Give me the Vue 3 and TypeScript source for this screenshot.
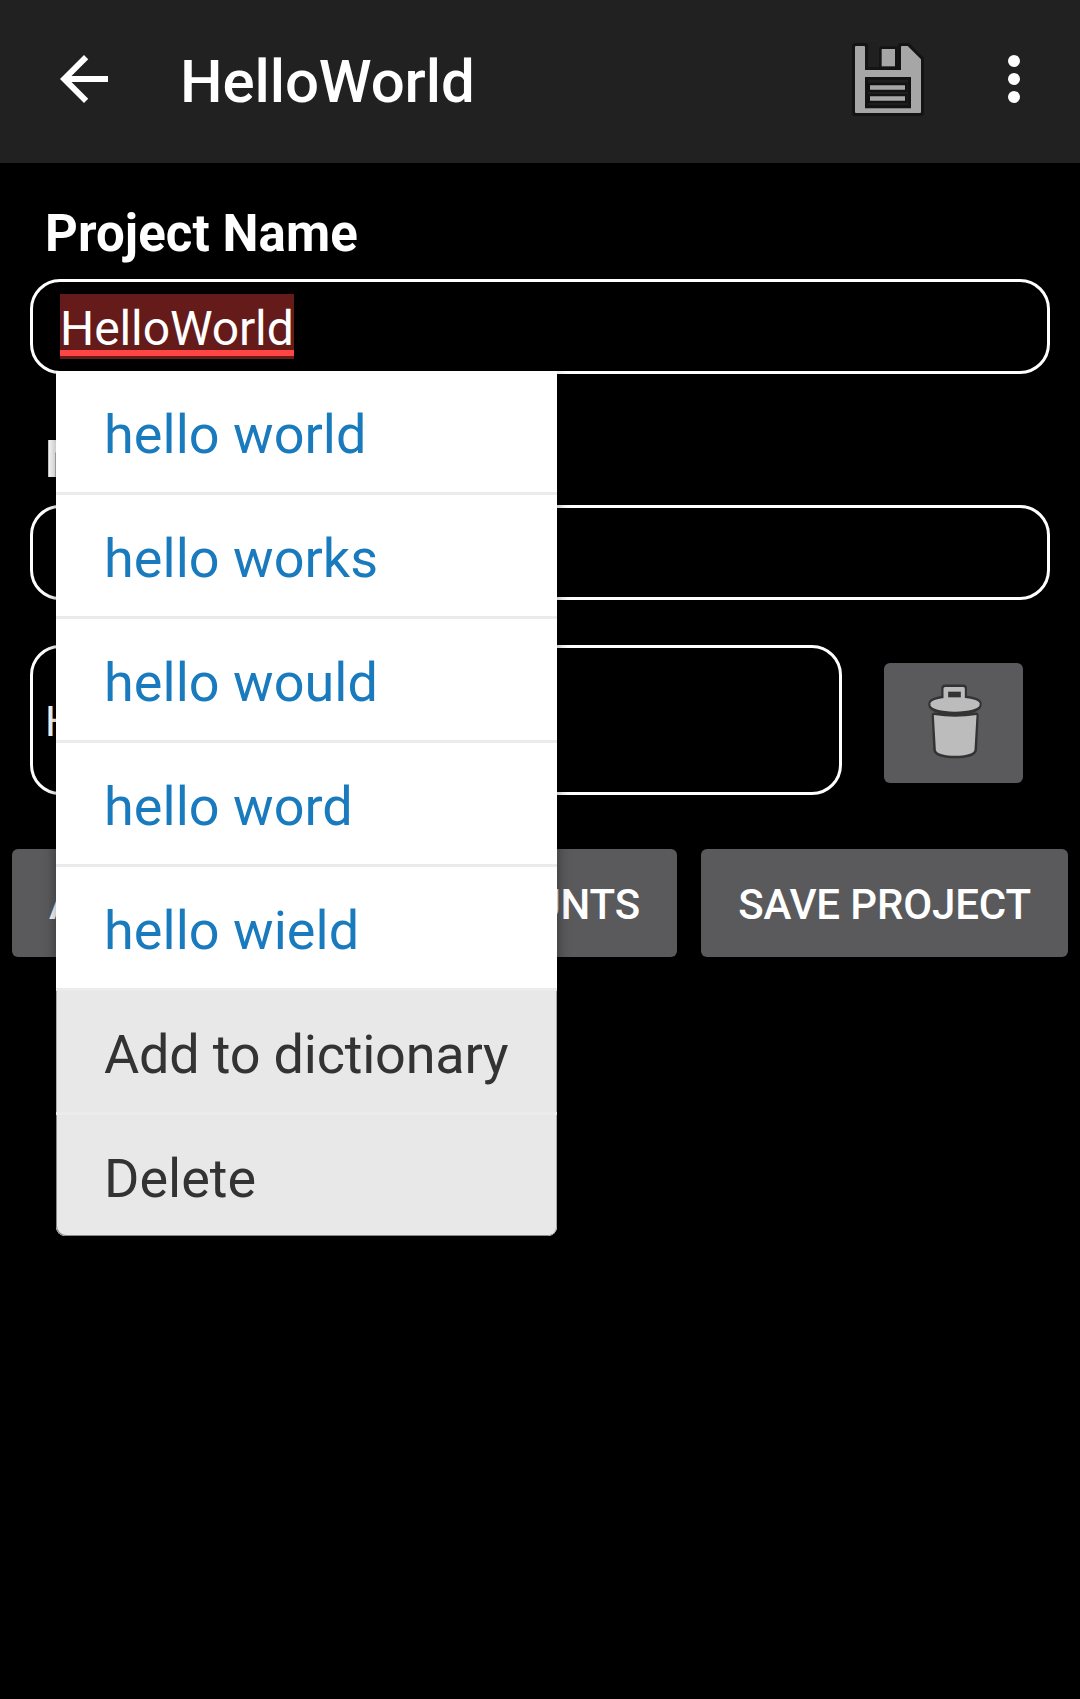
<script setup lang="ts">
import { ref } from 'vue'

interface MenuEntry {
  label: string
  kind: 'suggestion' | 'action'
}

const projectName = ref('HelloWorld')

const entries: MenuEntry[] = [
  { label: 'hello world', kind: 'suggestion' },
  { label: 'hello works', kind: 'suggestion' },
  { label: 'hello would', kind: 'suggestion' },
  { label: 'hello word', kind: 'suggestion' },
  { label: 'hello wield', kind: 'suggestion' },
  { label: 'Add to dictionary', kind: 'action' },
  { label: 'Delete', kind: 'action' },
]
</script>

<template>
  <div class="screen">
    <header class="app-bar">
      <svg class="back" viewBox="0 0 24 24">
        <path d="M20 11H7.83l5.59-5.59L12 4l-8 8 8 8 1.41-1.41L7.83 13H20z" fill="#fff" />
      </svg>
      <h1 class="title">{{ projectName }}</h1>
      <svg class="save" viewBox="96 66 216 225">
        <path d="M105 78H136V150H242V78H264L303 117V279H105Z" fill="#141414" stroke="#141414" stroke-width="18" stroke-linejoin="round" />
        <path d="M146 68H174V139H146Z" fill="#202020" />
        <path d="M185 87H225V139H185Z" fill="#141414" stroke="#141414" stroke-width="16" stroke-linejoin="round" />
        <path d="M107 78H133L135 80V150H243V80L245 78H263L303 118V277L301 279H107L105 277V80Z" fill="#a6a6a6" />
        <path d="M185 87H225V139H185Z" fill="#a6a6a6" />
        <path d="M135 171H273V265H135Z" fill="#121212" />
        <path d="M144 180H264V256H144Z" fill="#1e1e1e" />
        <path d="M143 188H262V216H143ZM143 222H262V249H143Z" fill="#121212" />
        <path d="M150 196H255V209H150ZM150 229H255V242H150Z" fill="#a6a6a6" />
      </svg>
      <svg class="more" viewBox="0 0 24 24">
        <circle cx="12" cy="6" r="2" fill="#fff" />
        <circle cx="12" cy="12" r="2" fill="#fff" />
        <circle cx="12" cy="18" r="2" fill="#fff" />
      </svg>
    </header>

    <main class="form">
      <label class="label">Project Name</label>
      <div class="field">
        <span class="selected">{{ projectName }}</span>
        <div class="menu">
          <div v-for="entry in entries" :key="entry.label" class="entry" :class="entry.kind">
            {{ entry.label }}
          </div>
        </div>
      </div>

      <label class="label second">Notes</label>
      <div class="field"></div>

      <div class="count-row">
        <div class="count">Hello</div>
        <button class="trash" aria-label="Delete count">
          <svg viewBox="70.5 69 180 240">
            <g stroke="#333" stroke-width="17" stroke-linejoin="round" fill="#333">
              <path d="M131 116V84Q131 82 134 82H188Q191 82 191 84V116Z" />
              <path d="M92 136V130C94 119 118 114 163 114S233 119 235 130V136C233 147 205 155 163 155S94 147 92 136Z" />
              <path d="M102 166Q164 175 226 166L221 269C220 281 193 286 164 286S108 281 107 269Z" />
            </g>
            <path d="M129 122V86Q129 81 134 81H188Q193 81 193 86V122Z" fill="#bcbcbc" />
            <path d="M90 136V130C92 119 118 113 163 113S235 119 237 130V136C235 147 205 155 163 155S92 147 90 136Z" fill="#bcbcbc" />
            <path d="M143 95H181V112H143Z" fill="#333" />
            <path d="M100 165Q164 175 228 165L222 269C221 281 193 287 164 287S107 281 106 269Z" fill="#bcbcbc" />
          </svg>
        </button>
      </div>
    </main>

    <footer class="buttons">
      <button class="btn wide"><span>ADD OR REMOVE</span><span>COUNTS</span></button>
      <button class="btn primary">SAVE PROJECT</button>
    </footer>
  </div>
</template>

<style>
body {
  margin: 0;
  background: #000;
}
</style>

<style scoped>
.screen {
  width: 1080px;
  height: 1699px;
  overflow: hidden;
  background: #000;
  color: #fff;
  font-family: Roboto, 'Liberation Sans', sans-serif;
}
.app-bar {
  display: flex;
  align-items: center;
  height: 163px;
  background: #212121;
}
.back {
  width: 72px;
  height: 72px;
  margin: 0 60px 5px 48px;
}
.title {
  flex: 1;
  margin: 0;
  font-size: 60px;
  font-weight: 500;
  line-height: 162px;
  letter-spacing: -0.1px;
}
.save {
  width: 72px;
  height: 75px;
  margin: 0 54px 4px 0;
}
.more {
  width: 72px;
  height: 72px;
  margin: 0 30px 5px 0;
}
.form {
  padding: 39px 30px 0;
}
.label {
  display: block;
  height: 77px;
  padding-left: 15px;
  font-size: 51px;
  font-weight: 700;
  line-height: 63px;
  letter-spacing: 0.08px;
}
.label.second {
  margin-top: 54px;
}
.field {
  position: relative;
  box-sizing: border-box;
  height: 95px;
  padding: 12px 27px;
  border: 3px solid #fff;
  border-radius: 30px;
}
.selected {
  display: block;
  width: 234px;
  height: 65px;
  font-size: 48px;
  line-height: 69px;
  letter-spacing: -0.1px;
  background: linear-gradient(#ff4444, #ff4444) 0 56px / 100% 6px no-repeat #661b1b;
}
.menu {
  position: absolute;
  z-index: 2;
  top: 89px;
  left: 23px;
  width: 501px;
  border-radius: 0 0 9px 9px;
  overflow: hidden;
  background: #fff;
  box-shadow: 0 3px 14px rgba(0, 0, 0, 0.42);
}
.entry {
  box-sizing: border-box;
  height: 124px;
  padding-left: 48px;
  border-bottom: 3px solid #ebebeb;
  font-size: 54px;
  line-height: 127px;
  white-space: nowrap;
}
.suggestion {
  color: #197bbe;
  letter-spacing: 0.04px;
}
.action {
  background: #e8e8e8;
  color: #333;
  box-shadow: inset 1px 0 #aaa, inset -1px 0 #aaa;
}
.action:not(:last-child) {
  letter-spacing: -0.2px;
}
.entry:last-child {
  height: 121px;
  border-bottom: 0;
  border-radius: 0 0 9px 9px;
  box-shadow: inset 1px -1px #888, inset -1px 0 #aaa;
}
.count-row {
  display: flex;
  align-items: center;
  gap: 42px;
  margin-top: 45px;
}
.count {
  box-sizing: border-box;
  width: 812px;
  height: 150px;
  padding-left: 12px;
  border: 3px solid #fff;
  border-radius: 30px;
  font-size: 42px;
  line-height: 147px;
}
button {
  border: 0;
  border-radius: 6px;
  background: #5a595b;
  color: #fff;
  font-family: inherit;
}
.trash {
  display: flex;
  align-items: center;
  justify-content: center;
  width: 139px;
  height: 120px;
  margin-top: 6px;
  padding: 0;
}
.trash svg {
  width: 60px;
  height: 80px;
}
.buttons {
  display: flex;
  gap: 24px;
  margin-top: 54px;
  padding: 0 12px;
}
.btn {
  height: 108px;
  padding: 3px 0 0;
  font-size: 42px;
  font-weight: 500;
  letter-spacing: -0.15px;
  white-space: nowrap;
}
.wide {
  display: flex;
  align-items: center;
  justify-content: space-between;
  width: 665px;
  padding: 3px 37px 0;
}
.primary {
  flex: 1;
}
</style>
